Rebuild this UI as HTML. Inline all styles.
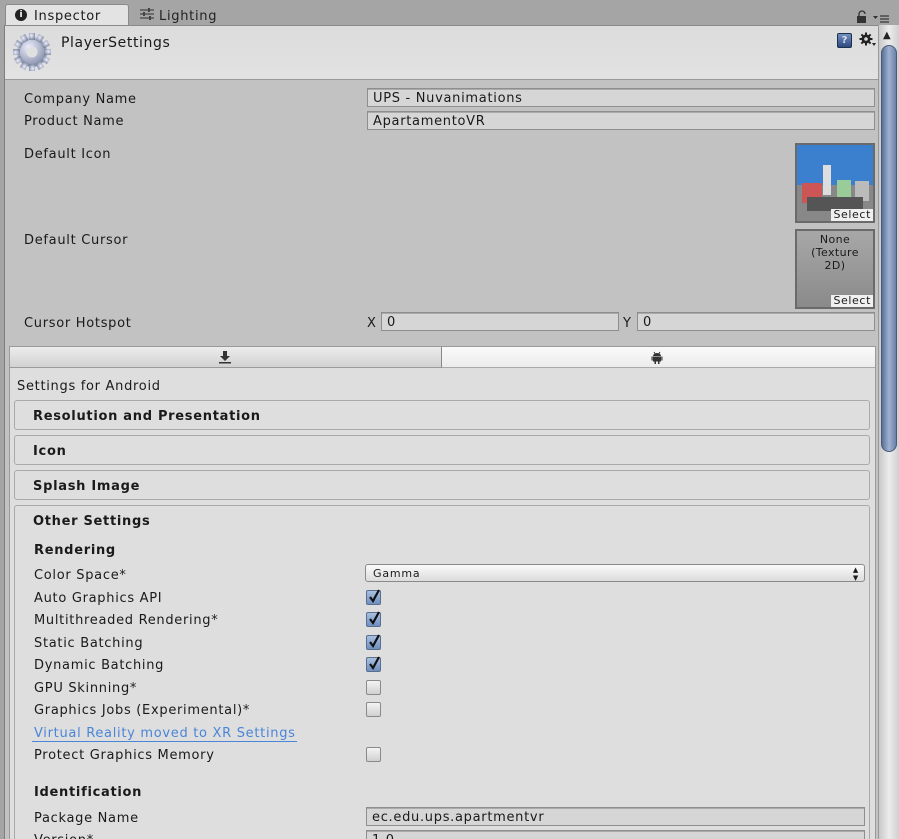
<!DOCTYPE html>
<html><head><meta charset="utf-8"><style>
*{box-sizing:border-box;margin:0;padding:0}
html,body{width:899px;height:839px;overflow:hidden}
body{background:#c2c2c2;font-family:"DejaVu Sans","Liberation Sans",sans-serif;font-size:13px;color:#1a1a1a;position:relative;letter-spacing:0.7px}
.a{position:absolute}
.t{position:absolute;white-space:nowrap;line-height:16px;transform:translateY(2px)}
.fld{position:absolute;background:#d6d6d6;border:1px solid #8e8e8e;box-shadow:inset 0 1px 0 #aaa;height:19px;line-height:19px;padding-left:5px;white-space:nowrap}
.box{position:absolute;left:14px;width:856px;border:1px solid #a9a9a9;border-radius:3px;background:#dedede}
.hd{font-weight:bold;left:33px;letter-spacing:0.7px}
.cb{position:absolute;left:366px;width:15px;height:15px;border:1px solid #8a8a8a;border-radius:2px;background:linear-gradient(#f4f4f4,#d0d0d0)}
.cb.on{background:linear-gradient(#a9c0e0,#6f8fbf);border-color:#5a6f90}
.cb.on svg{position:absolute;left:0;top:-2px}
</style></head><body>
<div class="a" style="left:0;top:0;width:899px;height:25px;background:#a5a5a5"></div>
<div class="a" style="left:5px;top:4px;width:124px;height:22px;background:#e3e3e3;border:1px solid #8a8a8a;border-bottom:none;border-radius:3px 3px 0 0"></div>
<div class="a" style="left:15px;top:9px;width:12px;height:12px;border-radius:6px;background:#222;color:#fff;font-size:9px;font-weight:bold;text-align:center;line-height:12px;letter-spacing:0">i</div>
<div class="t" style="left:34px;top:7px">Inspector</div>
<svg class="a" style="left:140px;top:8px" width="14" height="12"><g stroke="#444" stroke-width="1.2"><line x1="0" y1="2" x2="14" y2="2"/><line x1="0" y1="6" x2="14" y2="6"/><line x1="0" y1="10" x2="14" y2="10"/></g><g fill="#444"><rect x="8" y="0" width="2" height="4"/><rect x="3" y="4" width="2" height="4"/><rect x="9" y="8" width="2" height="4"/></g></svg>
<div class="t" style="left:159px;top:7px;color:#222">Lighting</div>
<svg class="a" style="left:856px;top:10px" width="40" height="14"><path d="M3 6V4a3 3 0 0 1 6 0" fill="none" stroke="#333" stroke-width="1.3"/><rect x="1" y="6" width="9" height="7" fill="#333"/><path d="M17 6h5l-2.5 3z" fill="#333"/><g stroke="#333" stroke-width="1.2"><line x1="24" y1="6" x2="33" y2="6"/><line x1="24" y1="9" x2="33" y2="9"/><line x1="24" y1="12" x2="33" y2="12"/></g></svg>
<div class="a" style="left:5px;top:25px;width:873px;height:55px;background:linear-gradient(#dcdcdc,#e2e2e2);border-top:1px solid #8a8a8a;border-bottom:1px solid #9a9a9a"></div>
<div class="a" style="left:0;top:25px;width:5px;height:814px;background:#a5a5a5;border-right:1px solid #7e7e7e"></div>
<svg class="a" style="left:12px;top:32px" width="40" height="40" viewBox="0 0 40 40"><defs><radialGradient id="g" cx="0.4" cy="0.35" r="0.7"><stop offset="0" stop-color="#eef"/><stop offset="1" stop-color="#7b86a0"/></radialGradient></defs><g fill="url(#g)"><circle cx="20" cy="20" r="15"/><g id="tt"><rect x="17" y="1" width="6" height="7"/></g><use href="#tt" transform="rotate(30 20 20)"/><use href="#tt" transform="rotate(60 20 20)"/><use href="#tt" transform="rotate(90 20 20)"/><use href="#tt" transform="rotate(120 20 20)"/><use href="#tt" transform="rotate(150 20 20)"/><use href="#tt" transform="rotate(180 20 20)"/><use href="#tt" transform="rotate(210 20 20)"/><use href="#tt" transform="rotate(240 20 20)"/><use href="#tt" transform="rotate(270 20 20)"/><use href="#tt" transform="rotate(300 20 20)"/><use href="#tt" transform="rotate(330 20 20)"/></g><circle cx="20" cy="20" r="5.5" fill="#e0e0e0"/></svg>
<div class="t" style="left:61px;top:33px;font-size:14px;letter-spacing:0.6px">PlayerSettings</div>
<div class="a" style="left:837px;top:33px;width:15px;height:15px;background:linear-gradient(#7390c0,#2c4a80);border:1px solid #1d3050;border-radius:2px;color:#dde;font-size:10px;text-align:center;line-height:13px;font-weight:bold;letter-spacing:0">?</div>
<svg class="a" style="left:859px;top:32px" width="18" height="16" viewBox="0 0 18 16"><g fill="#222"><circle cx="7" cy="7" r="4.5"/><g id="gt"><rect x="6" y="0.5" width="2" height="13"/></g><use href="#gt" transform="rotate(45 7 7)"/><use href="#gt" transform="rotate(90 7 7)"/><use href="#gt" transform="rotate(135 7 7)"/><path d="M13 11h4l-2 3z"/></g><circle cx="7" cy="7" r="1.8" fill="#ddd"/></svg>
<div class="a" style="left:878px;top:25px;width:21px;height:814px;background:linear-gradient(90deg,#c8c8c8,#ececec,#d0d0d0);border-left:1px solid #999"></div>
<div class="t" style="left:883px;top:26px;font-size:10px;color:#222;letter-spacing:0">▲</div>
<div class="a" style="left:881px;top:45px;width:16px;height:407px;border-radius:8px;background:linear-gradient(90deg,#5a7098,#9fb2d0,#6a80a8);border:1px solid #4a5a78"></div>
<div class="t" style="left:24px;top:90px">Company Name</div>
<div class="fld" style="left:367px;top:88px;width:508px">UPS - Nuvanimations</div>
<div class="t" style="left:24px;top:112px">Product Name</div>
<div class="fld" style="left:367px;top:111px;width:508px">ApartamentoVR</div>
<div class="t" style="left:24px;top:145px">Default Icon</div>
<div class="a" style="left:795px;top:143px;width:80px;height:80px;border:2px solid #6a6a6a;background:#fff;overflow:hidden">
<svg width="76" height="76"><rect width="76" height="76" fill="#3b7fcf"/><rect y="40" width="76" height="36" fill="#888"/><rect x="26" y="20" width="8" height="30" fill="#ddd"/><rect x="5" y="38" width="20" height="20" fill="#c55"/><rect x="40" y="35" width="14" height="22" fill="#9c9"/><rect x="58" y="36" width="14" height="20" fill="#bbb"/><rect x="10" y="52" width="56" height="14" fill="#555"/></svg>
<div class="a" style="right:0;bottom:0;background:#f0f0f0;font-size:11px;line-height:12px;padding:0 2px;letter-spacing:0.6px">Select</div></div>
<div class="t" style="left:24px;top:231px">Default Cursor</div>
<div class="a" style="left:795px;top:229px;width:80px;height:80px;border:2px solid #6a6a6a;background:linear-gradient(#a8a8a8,#8a8a8a);text-align:center;font-size:11px;line-height:13px;padding-top:2px;letter-spacing:0.4px">None<br>(Texture<br>2D)
<div class="a" style="right:0;bottom:0;background:#f0f0f0;line-height:12px;padding:0 2px;letter-spacing:0.6px">Select</div></div>
<div class="t" style="left:24px;top:314px">Cursor Hotspot</div>
<div class="t" style="left:367px;top:314px">X</div>
<div class="fld" style="left:381px;top:312px;width:238px">0</div>
<div class="t" style="left:623px;top:314px">Y</div>
<div class="fld" style="left:637px;top:312px;width:238px">0</div>
<div class="a" style="left:9px;top:346px;width:867px;height:493px;background:#dedede;border:1px solid #9a9a9a;border-bottom:none"></div>
<div class="a" style="left:10px;top:347px;width:432px;height:21px;background:linear-gradient(#ececec,#d2d2d2);border-bottom:1px solid #9a9a9a;border-right:1px solid #888"></div>
<div class="a" style="left:442px;top:347px;width:433px;height:21px;background:linear-gradient(#fafafa,#ececec);border-bottom:1px solid #aaa"></div>
<svg class="a" style="left:218px;top:350px" width="14" height="14"><path d="M5 1h4v5h3l-5 5-5-5h3z" fill="#333"/><rect x="1" y="12" width="12" height="1.5" fill="#333"/></svg>
<svg class="a" style="left:651px;top:351px" width="12" height="14"><path d="M3 1l1 1.5M9 1L8 2.5" stroke="#333"/><path d="M2 5a4 3 0 0 1 8 0z" fill="#333"/><rect x="2" y="5.5" width="8" height="5" fill="#333"/><rect x="0.5" y="5.5" width="1.2" height="4" fill="#333"/><rect x="10.3" y="5.5" width="1.2" height="4" fill="#333"/><rect x="3.5" y="10" width="1.5" height="3" fill="#333"/><rect x="7" y="10" width="1.5" height="3" fill="#333"/></svg>
<div class="t" style="left:17px;top:377px">Settings for Android</div>
<div class="box" style="top:400px;height:30px"></div><div class="t hd" style="top:407px">Resolution and Presentation</div>
<div class="box" style="top:435px;height:30px"></div><div class="t hd" style="top:442px">Icon</div>
<div class="box" style="top:470px;height:30px"></div><div class="t hd" style="top:477px">Splash Image</div>
<div class="box" style="top:505px;height:340px"></div><div class="t hd" style="top:512px">Other Settings</div>
<div class="t hd" style="left:34px;top:541px">Rendering</div>
<div class="t" style="left:34px;top:566px">Color Space*</div>
<div class="a" style="left:365px;top:564px;width:500px;height:18px;border:1px solid #8a8a8a;border-radius:3px;background:linear-gradient(#fafafa,#dcdcdc);font-size:11px;line-height:17px;padding-left:7px;letter-spacing:0.8px">Gamma<span class="a" style="right:5px;top:1px;font-size:7px;line-height:8px">▲<br>▼</span></div>
<div class="t" style="left:34px;top:589px">Auto Graphics API</div>
<div class="t" style="left:34px;top:611px">Multithreaded Rendering*</div>
<div class="t" style="left:34px;top:634px">Static Batching</div>
<div class="t" style="left:34px;top:656px">Dynamic Batching</div>
<div class="t" style="left:34px;top:679px">GPU Skinning*</div>
<div class="t" style="left:34px;top:701px">Graphics Jobs (Experimental)*</div>
<div class="t" style="left:34px;top:724px;color:#4a85d8">Virtual Reality moved to XR Settings</div>
<div class="a" style="left:32px;top:741px;width:265px;height:1px;background:#4a85d8"></div>
<div class="t" style="left:34px;top:746px">Protect Graphics Memory</div>
<div class="cb on" style="top:590px"><svg width="15" height="15"><path d="M3 8l3 4 6-11" fill="none" stroke="#111" stroke-width="2.2"/></svg></div>
<div class="cb on" style="top:612px"><svg width="15" height="15"><path d="M3 8l3 4 6-11" fill="none" stroke="#111" stroke-width="2.2"/></svg></div>
<div class="cb on" style="top:635px"><svg width="15" height="15"><path d="M3 8l3 4 6-11" fill="none" stroke="#111" stroke-width="2.2"/></svg></div>
<div class="cb on" style="top:657px"><svg width="15" height="15"><path d="M3 8l3 4 6-11" fill="none" stroke="#111" stroke-width="2.2"/></svg></div>
<div class="cb" style="top:680px"></div>
<div class="cb" style="top:702px"></div>
<div class="cb" style="top:747px"></div>
<div class="t hd" style="left:34px;top:783px">Identification</div>
<div class="t" style="left:34px;top:809px">Package Name</div>
<div class="fld" style="left:366px;top:807px;width:499px">ec.edu.ups.apartmentvr</div>
<div class="t" style="left:34px;top:831px">Version*</div>
<div class="fld" style="left:366px;top:830px;width:499px">1.0</div>
</body></html>
